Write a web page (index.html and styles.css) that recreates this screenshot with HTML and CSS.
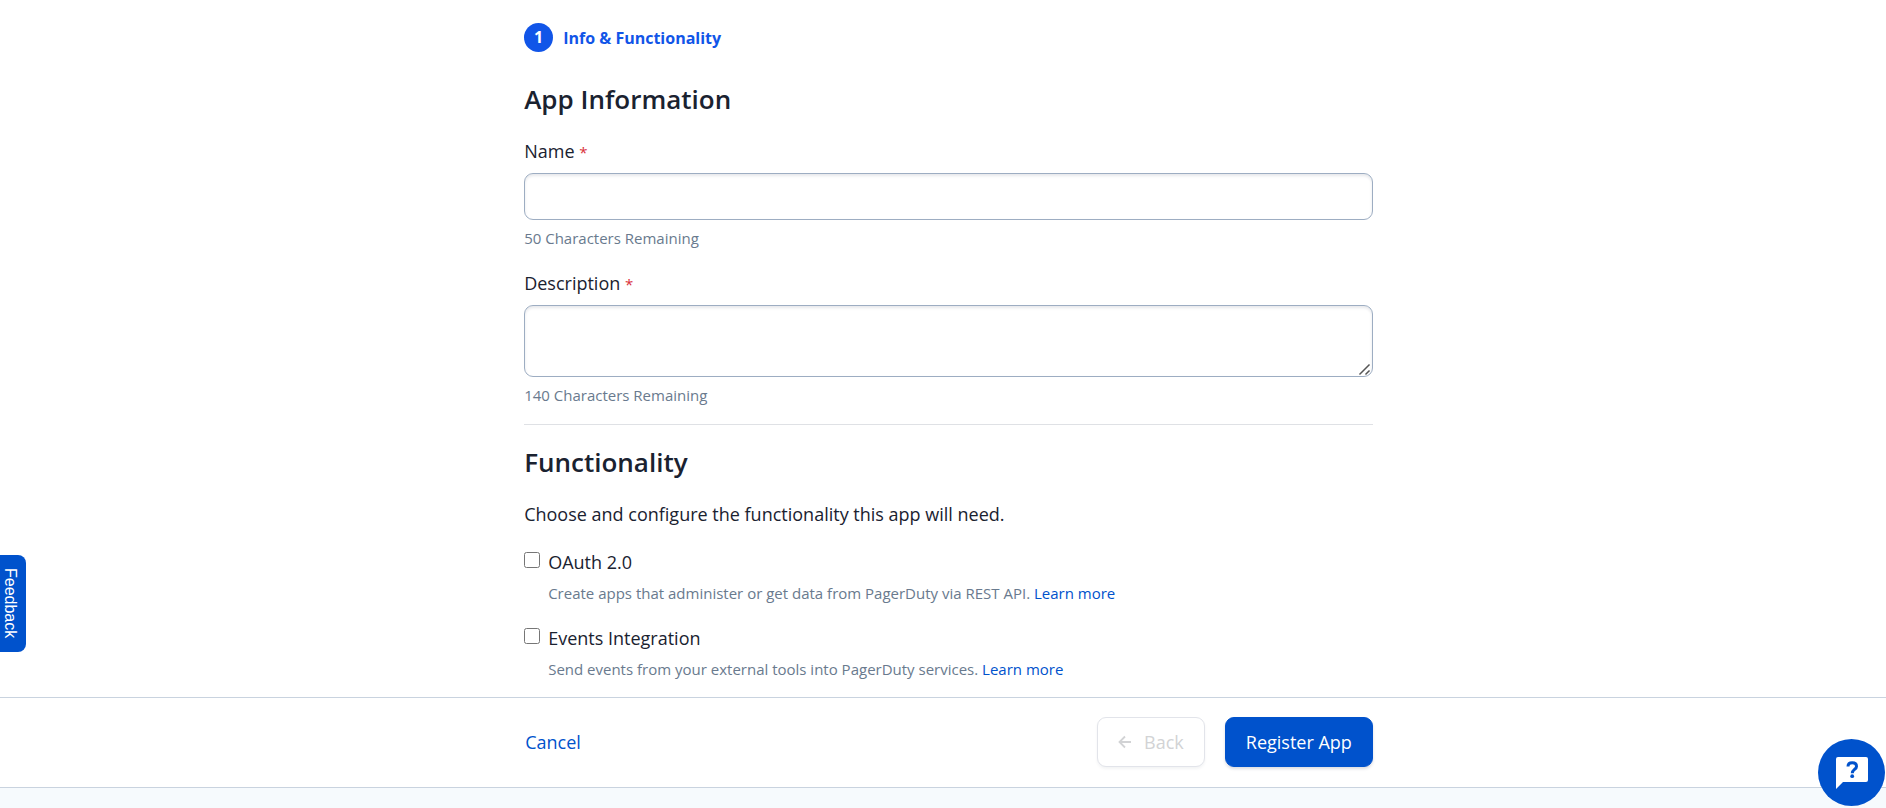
FILE: index.html
```
<!DOCTYPE html>
<html lang="en">
<head>
<meta charset="utf-8">
<title>Register App</title>
<link rel="stylesheet" href="styles.css">
</head>
<body>
<main class="content">
  <form class="column" id="app-form">
    <div class="step"><span class="step-number">1</span><span class="step-label">Info &amp; Functionality</span></div>
    <section class="section">
      <h2 class="heading">App Information</h2>
      <div class="field">
        <label class="label" for="name">Name <span class="required">*</span></label>
        <input class="control" id="name" type="text" maxlength="50">
        <p class="hint">50 Characters Remaining</p>
      </div>
      <div class="field">
        <label class="label" for="description">Description <span class="required">*</span></label>
        <textarea class="control control-area" id="description" maxlength="140"></textarea>
        <p class="hint">140 Characters Remaining</p>
      </div>
    </section>
    <section class="section section-divided">
      <h2 class="heading">Functionality</h2>
      <p class="intro">Choose and configure the functionality this app will need.</p>
      <div class="option">
        <input class="check" type="checkbox" id="oauth">
        <div>
          <label class="label" for="oauth">OAuth 2.0</label>
          <p class="hint">Create apps that administer or get data from PagerDuty via REST API. <a class="link" href="#">Learn more</a></p>
        </div>
      </div>
      <div class="option">
        <input class="check" type="checkbox" id="events">
        <div>
          <label class="label" for="events">Events Integration</label>
          <p class="hint">Send events from your external tools into PagerDuty services. <a class="link" href="#">Learn more</a></p>
        </div>
      </div>
    </section>
  </form>
</main>
<footer class="footer">
  <div class="column actions">
    <a class="link cancel" href="#">Cancel</a>
    <button class="button button-back" type="button" disabled>
      <svg class="arrow" viewBox="0 0 14 14" aria-hidden="true"><path d="M13 7H1.500M7 1.500 1.500 7 7 12.500" fill="none" stroke="currentColor" stroke-width="1.800"/></svg>
      Back
    </button>
    <button class="button button-primary" type="submit" form="app-form">Register App</button>
  </div>
</footer>
<div class="strip"></div>
<button class="feedback" type="button">Feedback</button>
<button class="chat" type="button" aria-label="Help">
  <svg class="chat-icon" viewBox="0 0 32 32" aria-hidden="true">
    <path d="M2 0h28a2 2 0 0 1 2 2v21a2 2 0 0 1-2 2H7l-7 7V2a2 2 0 0 1 2-2z" fill="#fff"/>
    <path d="M12 9.500C12 7 13.700 5.800 16.200 5.800s4.300 1.300 4.300 3.600c0 3-4.200 3.200-4.200 6.800" fill="none" stroke="#0052cc" stroke-width="3"/>
    <circle cx="16.200" cy="19.200" r="1.900" fill="#0052cc"/>
  </svg>
</button>
</body>
</html>
```
FILE: styles.css
```
* { box-sizing: border-box; }

body {
  margin: 0;
  min-height: 100vh;
  display: flex;
  flex-direction: column;
  background: #fff;
  color: #1a2230;
  font: 18px/24px "Open Sans", "Noto Sans", sans-serif;
}

h2, p { margin: 0; }

.content {
  flex: 1;
  padding: 23px 0 8px 11px;
}

.column {
  width: 45vw;
  margin: 0 auto;
}

.step {
  display: flex;
  align-items: center;
  gap: 10px;
  color: #1155e8;
  font-size: 16px;
  font-weight: 700;
}

.step-number {
  width: 29px;
  height: 29px;
  border-radius: 50%;
  background: #1155e8;
  color: #fff;
  line-height: 28px;
  text-align: center;
}

.section { padding-top: 28px; }

.section-divided {
  margin-top: 17px;
  padding-top: 18px;
  border-top: 1px solid #dfe1e5;
}

.heading {
  margin-bottom: 20px;
  font-size: 26px;
  font-weight: 600;
  line-height: 39px;
}

.intro { margin-bottom: 24px; }

.field + .field { margin-top: 21px; }

.label { display: block; }

.required {
  color: #d92f3a;
  font-size: 15px;
  line-height: 1;
}

.control {
  display: block;
  width: 100%;
  height: 47px;
  margin: 10px 0 6px;
  padding: 8px 12px;
  border: 1px solid #9dadc2;
  border-radius: 9px;
  background: #fff;
  box-shadow: inset 0 2px 3px rgba(20, 30, 60, 0.1);
  font: inherit;
}

.control-area {
  height: 72px;
  resize: vertical;
}

.control-area::-webkit-resizer {
  background: url("data:image/svg+xml,%3Csvg xmlns='http://www.w3.org/2000/svg' viewBox='0 0 15 15'%3E%3Cpath d='M3 13 12 4M9 13l3-3' fill='none' stroke='%23555' stroke-width='1.500' stroke-linecap='square'/%3E%3C/svg%3E") no-repeat;
}

.hint {
  color: #697a8e;
  font-size: 15px;
}

.link {
  color: #0052cc;
  text-decoration: none;
}

.option {
  display: flex;
  gap: 8px;
}

.option + .option { margin-top: 21px; }

.option .hint { margin-top: 7px; }

.check {
  width: 16px;
  height: 16px;
  margin: 2px 0 0;
}

.footer {
  padding: 19px 0 20px 11px;
  border-top: 1px solid #c9d3df;
  border-bottom: 1px solid #c9d3df;
}

.actions {
  display: flex;
  align-items: center;
  gap: 20px;
}

.cancel {
  margin-right: auto;
  padding-left: 1px;
}

.button {
  display: flex;
  align-items: center;
  gap: 12px;
  height: 50px;
  padding: 0 20px;
  border: 1px solid #0052cc;
  border-radius: 9px;
  background: #0052cc;
  box-shadow: 0 2px 3px rgba(20, 30, 60, 0.15);
  color: #fff;
  font: inherit;
}

.button-back {
  border-color: #e2e4ea;
  background: #fff;
  box-shadow: 0 2px 3px rgba(20, 30, 60, 0.05);
  color: #d2d3d5;
}

.arrow {
  width: 14px;
  height: 14px;
}

.strip {
  height: 20px;
  background: #f6fafd;
}

.feedback {
  position: fixed;
  left: 0;
  top: 555px;
  width: 26px;
  height: 97px;
  padding: 0 6px 0 0;
  border: 0;
  border-radius: 0 8px 8px 0;
  background: #0052cc;
  color: #fff;
  font: 16px/20px "Liberation Sans", sans-serif;
  writing-mode: vertical-rl;
}

.chat {
  position: fixed;
  right: 1px;
  bottom: 2px;
  display: flex;
  align-items: center;
  justify-content: center;
  width: 67px;
  height: 67px;
  padding: 0;
  border: 0;
  border-radius: 50%;
  background: #0052cc;
}

.chat-icon {
  width: 32px;
  height: 32px;
}
```
